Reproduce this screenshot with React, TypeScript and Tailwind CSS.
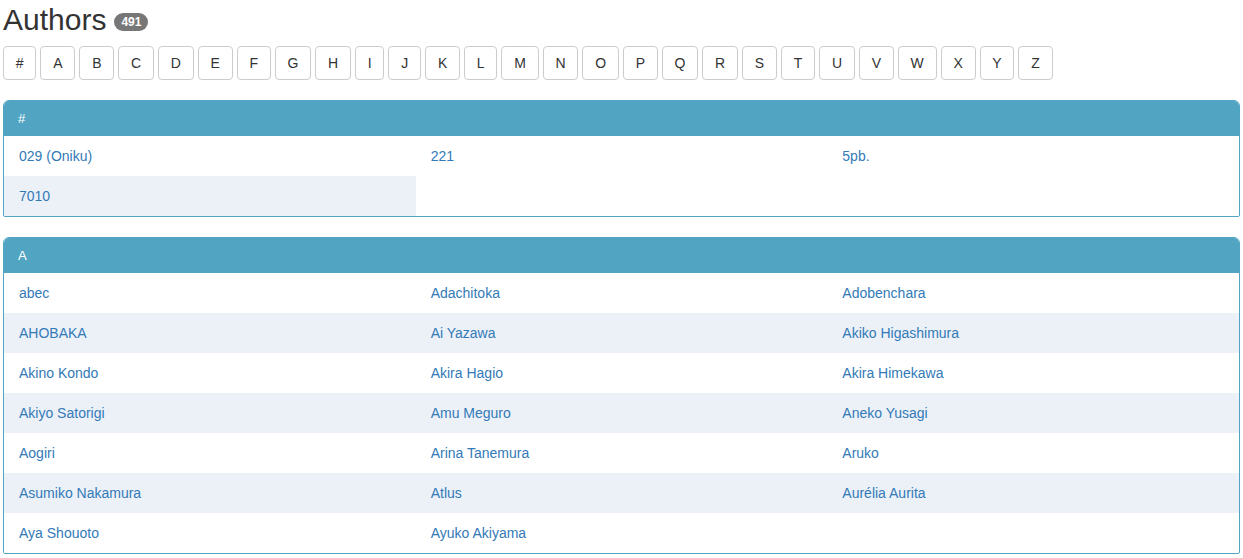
const letters = ['#', 'A', 'B', 'C', 'D', 'E', 'F', 'G', 'H', 'I', 'J', 'K', 'L', 'M', 'N', 'O', 'P', 'Q', 'R', 'S', 'T', 'U', 'V', 'W', 'X', 'Y', 'Z'];

const groups: { title: string; authors: string[] }[] = [
  { title: '#', authors: ['029 (Oniku)', '221', '5pb.', '7010'] },
  {
    title: 'A',
    authors: [
      'abec', 'Adachitoka', 'Adobenchara',
      'AHOBAKA', 'Ai Yazawa', 'Akiko Higashimura',
      'Akino Kondo', 'Akira Hagio', 'Akira Himekawa',
      'Akiyo Satorigi', 'Amu Meguro', 'Aneko Yusagi',
      'Aogiri', 'Arina Tanemura', 'Aruko',
      'Asumiko Nakamura', 'Atlus', 'Aurélia Aurita',
      'Aya Shouoto', 'Ayuko Akiyama',
    ],
  },
];

function AuthorPanel({ title, authors }: { title: string; authors: string[] }) {
  return (
    <div className="mb-[20px] overflow-hidden rounded-t-[6px] rounded-b-[2px] border border-[#51a5c3]">
      <div className="flex h-[35px] items-center bg-[#51a5c3] px-[14px] text-[13px] text-white">{title}</div>
      <div className="grid grid-cols-3">
        {authors.map((name, i) => (
          <div
            key={name}
            className={`flex h-[40px] items-center px-[15px] ${Math.floor(i / 3) % 2 === 1 ? 'bg-[#ecf1f8]' : 'bg-white'}`}
          >
            <a className="text-[14px] text-[#337ab7]">{name}</a>
          </div>
        ))}
      </div>
    </div>
  );
}

export default function App() {
  return (
    <div className="bg-white px-[3px] font-['Liberation_Sans',Arial,sans-serif] text-[#333]">
      <h1 className="flex items-center pt-[3px] text-[30px] leading-[33px]">
        Authors
        <span className="ml-2 mt-[4px] rounded-[10px] bg-[#777] px-[7px] py-[2px] text-[12px] font-bold leading-[14px] text-white">491</span>
      </h1>
      <div className="mt-[10px] flex gap-1">
        {letters.map((l) => (
          <button
            key={l}
            className="h-[34px] rounded-[4px] border border-[#ccc] bg-white px-[11.8px] text-[14px] text-[#333]"
          >
            {l}
          </button>
        ))}
      </div>
      <div className="mt-[20px]">
        {groups.map((g) => (
          <AuthorPanel key={g.title} title={g.title} authors={g.authors} />
        ))}
      </div>
    </div>
  );
}
